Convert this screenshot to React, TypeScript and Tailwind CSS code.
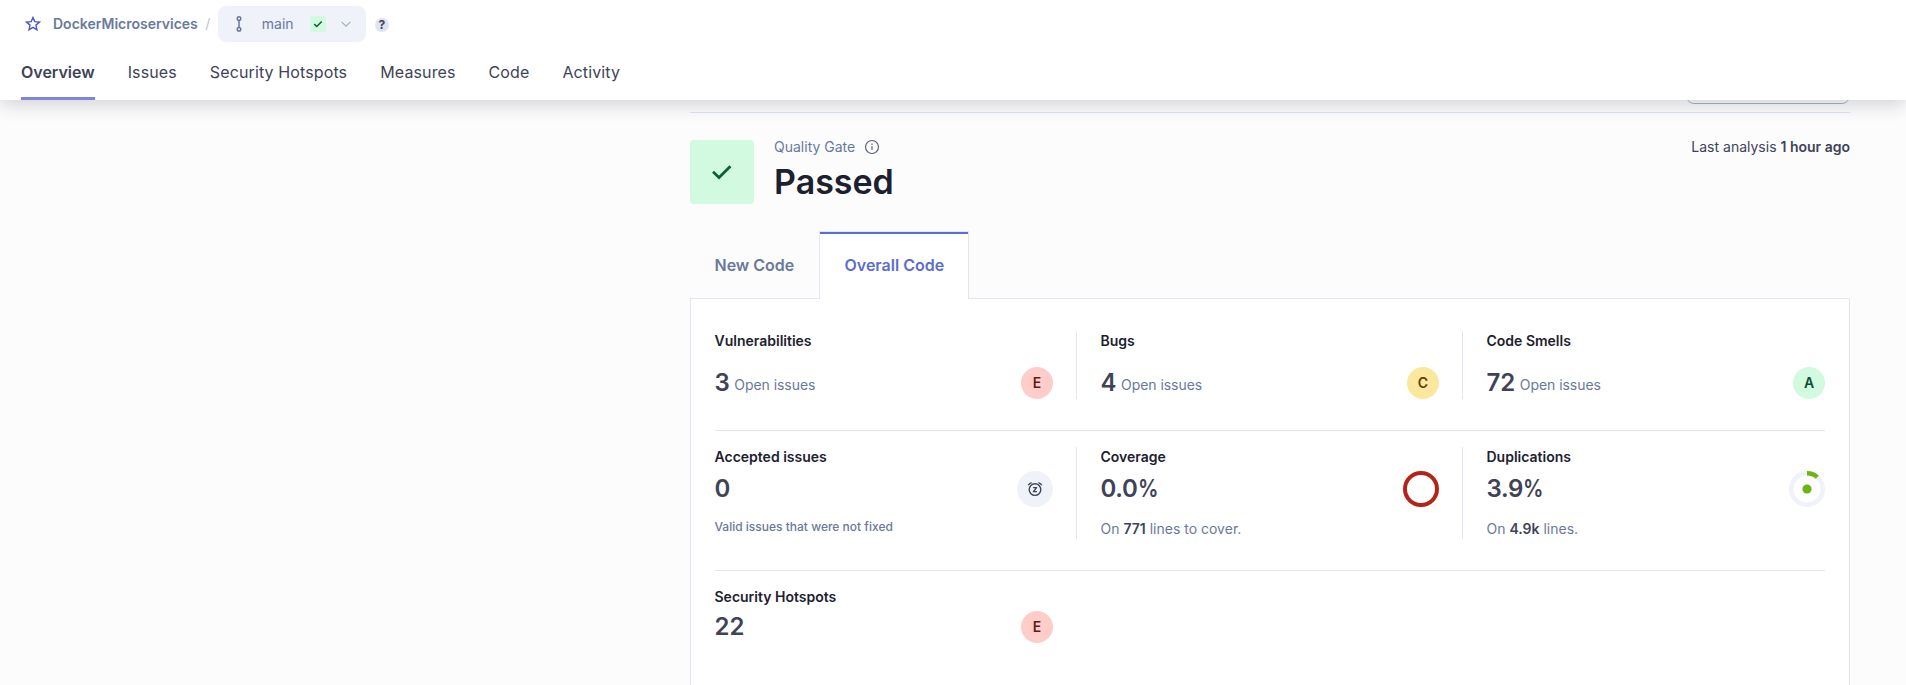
import type { ReactNode } from "react";

const NAV_ITEMS = ["Issues", "Security Hotspots", "Measures", "Code", "Activity"];

function StarIcon() {
  return (
    <svg width="16" height="16" viewBox="0 0 16 16" fill="none" stroke="#4b56c8" strokeWidth="1.4">
      <path d="M8 1.5 9.8 5.6 14.4 6.1 10.95 9.1 11.95 13.8 8 11.4 4.05 13.8 5.05 9.1 1.6 6.1 6.2 5.6Z" />
    </svg>
  );
}

function BranchIcon() {
  return (
    <svg width="16" height="16" viewBox="0 0 16 16" fill="none" stroke="#69799c" strokeWidth="1.5">
      <circle cx="8" cy="2.6" r="1.8" />
      <circle cx="8" cy="13.2" r="1.8" />
      <path d="M8 4.4V11.4" />
    </svg>
  );
}

function SnoozeIcon() {
  return (
    <svg width="16" height="16" viewBox="0 0 16 16" fill="none" stroke="#3e4357" strokeWidth="1.4">
      <circle cx="8" cy="8.6" r="5.8" />
      <path d="M6.1 6.6H9.6L6.4 10.6H10" strokeLinejoin="round" />
      <path d="M1.2 4.3Q2.2 2.3 4.6 1.6M14.8 4.3Q13.8 2.3 11.4 1.6" />
    </svg>
  );
}

function InfoIcon() {
  return (
    <svg width="16" height="16" viewBox="0 0 16 16" fill="none" stroke="#5b6178" strokeWidth="1.2">
      <circle cx="8" cy="8" r="6.5" />
      <path d="M8 7.2V11" />
      <circle cx="8" cy="5.3" r="0.75" fill="#5b6178" stroke="none" />
    </svg>
  );
}

function Rating({ value, className }: { value: string; className: string }) {
  return (
    <span className={`flex h-8 w-8 items-center justify-center rounded-full text-sm font-semibold ${className}`}>
      {value}
    </span>
  );
}

function Title({ children }: { children: ReactNode }) {
  return <div className="-ml-[0.5px] h-5 text-sm leading-5 font-semibold text-[#1d212f]">{children}</div>;
}

function IssueMeasure({ title, count, rating }: { title: string; count: number; rating: ReactNode }) {
  return (
    <>
      <Title>{title}</Title>
      <div className="mt-4 flex h-8 items-center justify-between">
        <div className="-ml-[0.5px] flex items-baseline gap-[4.5px]">
          <span className="text-2xl font-semibold text-[#3e4357]">{count}</span>
          <span className="-translate-y-px text-sm tracking-[-0.05px] text-[#69799c]">Open issues</span>
        </div>
        {rating}
      </div>
    </>
  );
}

function Measure({
  title,
  value,
  percent = false,
  icon,
  children,
}: {
  title: string;
  value: string;
  percent?: boolean;
  icon: ReactNode;
  children: ReactNode;
}) {
  return (
    <>
      <Title>{title}</Title>
      <div className="mt-1 flex h-9 items-center justify-between">
        <span className="-ml-[0.5px] flex text-2xl font-semibold text-[#3e4357]">
          <span className={percent ? "tracking-[-0.3px]" : ""}>{value}</span>
          {percent && <span className="origin-left scale-x-[0.85]">%</span>}
        </span>
        {icon}
      </div>
      <div className="mt-3 -ml-[0.5px] text-[#69799c]">{children}</div>
    </>
  );
}

const RED = "bg-[#fecdca] text-[#651b14]";

export default function App() {
  return (
    <div className="flex h-[685px] flex-col overflow-hidden bg-[#fcfcfd] font-[Inter,sans-serif]">
      <header className="relative z-10 h-[100px] shrink-0 bg-white shadow-[0_4px_18px_rgba(29,33,47,0.2)]">
        <div className="flex items-center pt-1.5 pl-[25px]">
          <StarIcon />
          <span className="ml-3 text-sm font-semibold text-[#69799c]">DockerMicroservices</span>
          <span className="ml-[7.5px] text-sm text-[#c0c4cf]">/</span>
          <button className="ml-[7.5px] flex h-9 w-[148px] items-center rounded-lg bg-[#eff2f9] pl-[13px]">
            <BranchIcon />
            <span className="ml-[15px] text-sm text-[#69799c]">main</span>
            <span className="ml-4 flex h-4 w-4 items-center justify-center rounded-xs bg-[#d1fae0]">
              <svg width="10" height="10" viewBox="0 0 10 10" fill="none" stroke="#08603b" strokeWidth="1.5">
                <path d="M1.3 5.1 3.8 7.5 8.7 2.4" />
              </svg>
            </span>
            <svg className="ml-[15px]" width="10" height="10" viewBox="0 0 10 10" fill="none" stroke="#a6adc0" strokeWidth="1.2">
              <path d="M0.6 2.8 5 7.2 9.4 2.8" />
            </svg>
          </button>
          <span className="mt-0.5 ml-[9px] flex h-3.5 w-3.5 items-center justify-center rounded-full bg-[#dfe4f2] text-xs leading-none font-bold text-[#3e4357]">
            ?
          </span>
        </div>
        <nav className="flex h-[58px] gap-[33px] pl-[21px] text-base text-[#3e4357]">
          <span className="border-b-3 border-[#7b87d9] pt-[18px] font-semibold">Overview</span>
          {NAV_ITEMS.map((item) => (
            <span key={item} className="pt-[18px] tracking-[0.12px]">
              {item}
            </span>
          ))}
        </nav>
      </header>

      <main className="ml-[690px] w-[1160px]">
        <div className="-mt-8 flex h-[45px] justify-end border-b border-[#dde3f2]">
          <div className="h-9 w-[164px] rounded-lg border border-[#a6b2cd]" />
        </div>

        <section className="mt-[27px] flex h-16">
          <div className="flex h-16 w-16 items-center justify-center rounded bg-[#d1fae0]">
            <svg width="24" height="24" viewBox="0 0 24 24" fill="none" stroke="#08603b" strokeWidth="2.7">
              <path d="M3 11.8 9 17.5 20.4 6.2" />
            </svg>
          </div>
          <div className="ml-5">
            <div className="-mt-[3px] flex h-5 items-center gap-[9px] text-sm text-[#69799c]">
              Quality Gate
              <InfoIcon />
            </div>
            <div className="mt-[3px] text-[34px] leading-[43px] font-semibold text-[#1d212f]">Passed</div>
          </div>
          <div className="-mt-[3px] ml-auto text-sm leading-5 text-[#3e4357]">
            Last analysis <b className="font-semibold">1 hour ago</b>
          </div>
        </section>

        <div className="mt-[27px] flex h-[68px] text-base font-semibold">
          <div className="w-[129px] pt-[22px] pl-[24.5px] text-[#69799c]">New Code</div>
          <div className="relative z-[1] w-[150px] border-x border-t border-[#e1e6f3] bg-white text-[#5d6cd0]">
            <div className="border-t-2 border-[#5d6cd0] pt-[19px] pl-[24.5px]">Overall Code</div>
          </div>
        </div>

        <section className="-mt-px h-[450px] border border-[#e1e6f3] bg-white px-6 pt-8">
          <div className="flex h-[68px]">
            <div className="w-[362px] border-r border-[#e1e6f3] pr-[23px]">
              <IssueMeasure title="Vulnerabilities" count={3} rating={<Rating value="E" className={RED} />} />
            </div>
            <div className="w-[386px] border-r border-[#e1e6f3] pr-[23px] pl-6">
              <IssueMeasure title="Bugs" count={4} rating={<Rating value="C" className="bg-[#fce89c] text-[#653f0c]" />} />
            </div>
            <div className="w-[362px] pl-6">
              <IssueMeasure
                title="Code Smells"
                count={72}
                rating={<Rating value="A" className="bg-[#d1fae0] text-[#0b4d35]" />}
              />
            </div>
          </div>

          <div className="mt-[31px] flex h-[110px] border-t border-[#e1e6f3] pt-4">
            <div className="h-[92px] w-[362px] border-r border-[#e1e6f3] pr-[23px]">
              <Measure
                title="Accepted issues"
                value="0"
                icon={
                  <span className="flex h-9 w-9 items-center justify-center rounded-full bg-[#eff2f9]">
                    <SnoozeIcon />
                  </span>
                }
              >
                <div className="text-xs leading-4 font-medium">Valid issues that were not fixed</div>
              </Measure>
            </div>
            <div className="h-[92px] w-[386px] border-r border-[#e1e6f3] pr-[23px] pl-6">
              <Measure
                title="Coverage"
                value="0.0"
                percent
                icon={
                  <svg width="36" height="36" viewBox="0 0 36 36" fill="none" stroke="#b42318" strokeWidth="4">
                    <circle cx="18" cy="18" r="16" />
                  </svg>
                }
              >
                <div className="text-sm leading-5">
                  On <b className="font-semibold text-[#3e4357]">771</b> lines to cover.
                </div>
              </Measure>
            </div>
            <div className="h-[92px] w-[362px] pl-6">
              <Measure
                title="Duplications"
                value="3.9"
                percent
                icon={
                  <svg width="36" height="36" viewBox="0 0 36 36" fill="none" strokeWidth="4.5">
                    <circle cx="18" cy="18" r="15.75" stroke="#eff2f9" />
                    <path d="M18 2.25A15.75 15.75 0 0 1 28.33 6.11" stroke="#6cb512" />
                    <circle cx="18" cy="18" r="4.6" fill="#6cb512" />
                  </svg>
                }
              >
                <div className="text-sm leading-5">
                  On <b className="font-semibold text-[#3e4357]">4.9k</b> lines.
                </div>
              </Measure>
            </div>
          </div>

          <div className="mt-[30px] border-t border-[#e1e6f3] pt-4">
            <div className="w-[338px]">
              <Title>Security Hotspots</Title>
              <div className="mt-1 flex h-8 items-center justify-between">
                <span className="-ml-[0.5px] text-2xl font-semibold text-[#3e4357]">22</span>
                <Rating value="E" className={RED} />
              </div>
            </div>
          </div>
        </section>
      </main>
    </div>
  );
}
